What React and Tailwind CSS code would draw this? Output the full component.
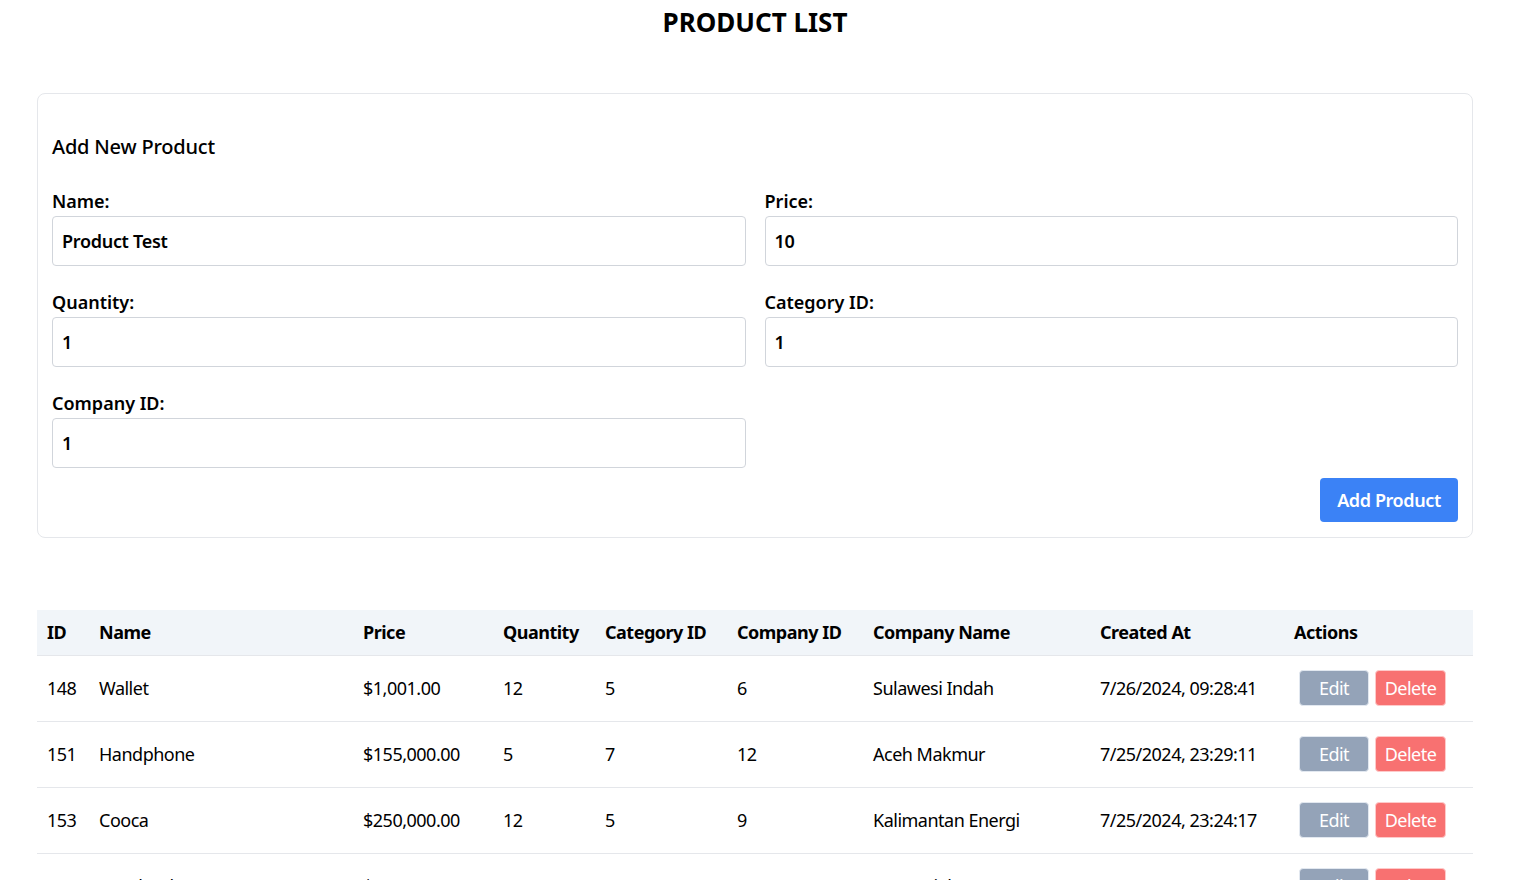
const products = [
  { id: 148, name: "Wallet", price: "$1,001.00", qty: 12, cat: 5, comp: 6, compName: "Sulawesi Indah", created: "7/26/2024, 09:28:41" },
  { id: 151, name: "Handphone", price: "$155,000.00", qty: 5, cat: 7, comp: 12, compName: "Aceh Makmur", created: "7/25/2024, 23:29:11" },
  { id: 153, name: "Cooca", price: "$250,000.00", qty: 12, cat: 5, comp: 9, compName: "Kalimantan Energi", created: "7/25/2024, 23:24:17" },
  { id: 154, name: "Notebook", price: "$75,000.00", qty: 3, cat: 2, comp: 4, compName: "Jawa Sejahtera", created: "7/25/2024, 22:10:05" },
];

function Field({ label, value }) {
  return (
    <div className="flex flex-col">
      <label className="text-[18px] font-semibold leading-[25px] text-black">{label}</label>
      <input
        readOnly
        value={value}
        className="mt-[2px] h-[50px] w-full rounded-[4px] border border-[#d1d5db] px-[9px] text-[18px] font-semibold tracking-[-0.3px] text-black outline-none"
      />
    </div>
  );
}

export default function App() {
  return (
    <div className="bg-white pl-[37px] pr-[50px] font-['Noto_Sans',sans-serif] text-black">
      <h1 className="pt-[4px] text-center text-[26px] font-bold leading-[36px]">PRODUCT LIST</h1>

      <div className="mt-[53px] rounded-[8px] border border-[#e5e7eb] px-[14px] pb-[15px] pt-[37px]">
        <h2 className="text-[20px] font-medium leading-[32px] tracking-[-0.2px]">Add New Product</h2>
        <div className="mt-[26px] grid grid-cols-2 gap-x-[19px] gap-y-[24px]">
          <Field label="Name:" value="Product Test" />
          <Field label="Price:" value="10" />
          <Field label="Quantity:" value="1" />
          <Field label="Category ID:" value="1" />
          <Field label="Company ID:" value="1" />
        </div>
        <div className="mt-[10px] flex justify-end">
          <button className="h-[44px] w-[138px] rounded-[4px] bg-[#3b82f6] text-[18px] font-semibold tracking-[-0.4px] text-white">
            Add Product
          </button>
        </div>
      </div>

      <table className="mt-[72px] w-full table-fixed border-collapse text-left text-[18px] tracking-[-0.5px]">
        <thead>
          <tr className="h-[45px] border-b border-[#e5e7eb] bg-[#f1f5f9]">
            <th className="w-[52px] pl-[10px] font-bold">ID</th>
            <th className="w-[264px] pl-[10px] font-bold">Name</th>
            <th className="w-[140px] pl-[10px] font-bold">Price</th>
            <th className="w-[102px] pl-[10px] font-bold">Quantity</th>
            <th className="w-[132px] pl-[10px] font-bold">Category ID</th>
            <th className="w-[136px] pl-[10px] font-bold">Company ID</th>
            <th className="w-[227px] pl-[10px] font-bold">Company Name</th>
            <th className="w-[194px] pl-[10px] font-bold">Created At</th>
            <th className="pl-[10px] font-bold">Actions</th>
          </tr>
        </thead>
        <tbody>
          {products.map((p) => (
            <tr key={p.id} className="h-[66px] border-b border-[#e5e7eb]">
              <td className="pl-[10px]">{p.id}</td>
              <td className="pl-[10px]">{p.name}</td>
              <td className="pl-[10px]">{p.price}</td>
              <td className="pl-[10px]">{p.qty}</td>
              <td className="pl-[10px]">{p.cat}</td>
              <td className="pl-[10px]">{p.comp}</td>
              <td className="pl-[10px]">{p.compName}</td>
              <td className="pl-[10px]">{p.created}</td>
              <td className="pl-[15px]">
                <div className="flex gap-[6px]">
                  <button className="h-[36px] w-[70px] rounded-[4px] border border-[#e2e8f0] bg-[#94a3b8] text-[18px] text-white">
                    Edit
                  </button>
                  <button className="h-[36px] w-[71px] rounded-[4px] border border-[#fecaca] bg-[#f87171] text-[18px] text-white">
                    Delete
                  </button>
                </div>
              </td>
            </tr>
          ))}
        </tbody>
      </table>
    </div>
  );
}
